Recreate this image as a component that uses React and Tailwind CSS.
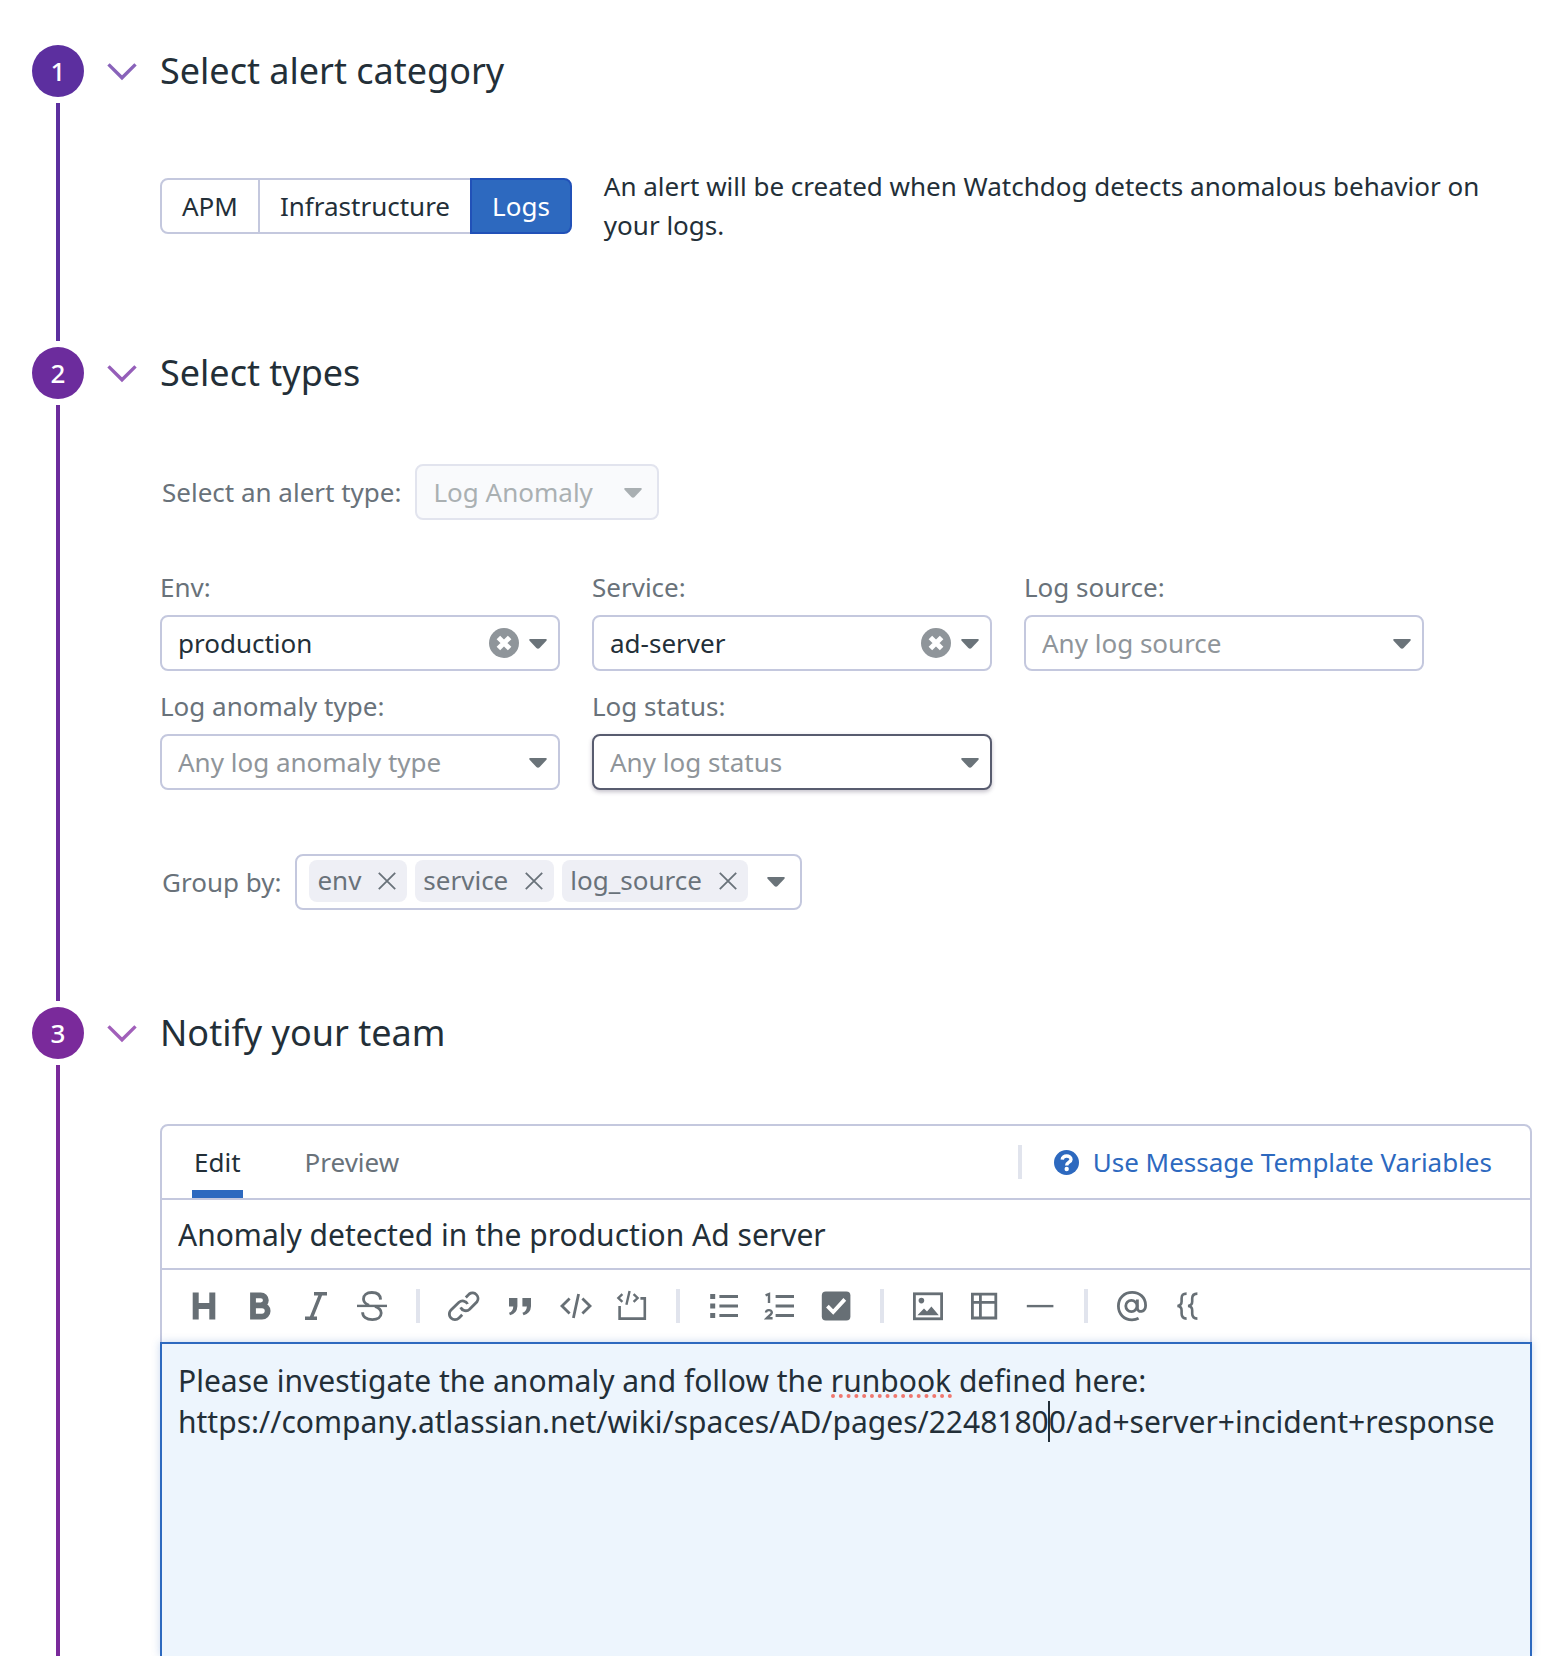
import React from "react";

const FONT = "font-['Noto_Sans','Open_Sans',sans-serif]";

function Step({ number, title, fill, chevron, last, children }) {
  return (
    <section className={"flex gap-6 px-8 " + (last ? "flex-1" : "")}>
      <div className="flex w-[52px] shrink-0 flex-col items-center gap-1.5 pb-1.5">
        <div
          className={
            "flex size-[52px] shrink-0 items-center justify-center rounded-full text-[26px] leading-[39px] font-medium text-white " +
            fill
          }
        >
          {number}
        </div>
        <div className={"w-1 flex-1 " + fill + (last ? " -mb-1.5" : "")} />
      </div>
      <div className="flex min-w-0 flex-1 flex-col">
        <div className="flex h-[52px] shrink-0 items-center gap-6">
          <button type="button" aria-label={"Collapse " + title} className={"w-7 " + chevron}>
            <svg viewBox="0 0 28 18" className="w-7 overflow-visible" fill="none" stroke="currentColor" strokeWidth="3.4">
              <path d="M0.5 2.4 L14 15.8 L27.5 2.4" />
            </svg>
          </button>
          <h2 className="text-[36px] leading-[52px]">{title}</h2>
        </div>
        <div className={"mt-[65px] flex flex-1 flex-col pl-[52px] " + (last ? "" : "pb-[97px]")}>{children}</div>
      </div>
    </section>
  );
}

function Caret({ className = "" }) {
  return (
    <svg viewBox="0 0 18 10" className={"w-[18px] shrink-0 " + className} fill="currentColor" aria-hidden="true">
      <path d="M1.2 0 H16.8 Q18.4 0.3 17.4 1.8 L10.6 9.1 Q9 10.5 7.4 9.1 L0.6 1.8 Q-0.4 0.3 1.2 0Z" />
    </svg>
  );
}

function Field({ id, label, value, placeholder, focused }) {
  return (
    <div className="flex flex-col gap-2">
      <label htmlFor={id} className="leading-[39px] text-[#69727a]">
        {label}
      </label>
      <div className="relative">
        <select
          id={id}
          defaultValue={value || ""}
          className={
            "h-14 w-full appearance-none rounded-lg border-2 bg-white px-4 outline-none " +
            (value ? "text-[#232f38] " : "text-[#8f959a] ") +
            (focused ? "border-[#585c6f] shadow-[0_2px_4px_rgba(60,50,80,0.3)]" : "border-[#c4c8de]")
          }
        >
          <option value="">{placeholder}</option>
          {value && <option value={value}>{value}</option>}
        </select>
        {value && (
          <button type="button" aria-label={"Clear " + label} className="absolute top-[13px] right-[41px]">
            <svg viewBox="0 0 30 30" className="size-[30px]" aria-hidden="true">
              <circle cx="15" cy="15" r="15" fill="#8f959a" />
              <path d="M9.4 9.4 L20.6 20.6 M20.6 9.4 L9.4 20.6" stroke="#fff" strokeWidth="5" />
            </svg>
          </button>
        )}
        <Caret className="pointer-events-none absolute top-6 right-[13px] text-[#6a7379]" />
      </div>
    </div>
  );
}

function Tag({ children }) {
  return (
    <span className="flex h-[42px] items-center gap-[17px] rounded-lg bg-[#eeeff5] pr-[11px] pb-px pl-2 leading-[39px] text-[#69727a]">
      {children}
      <button type="button" aria-label={"Remove " + children}>
        <svg viewBox="0 0 18 18" className="size-[18px]" stroke="currentColor" strokeWidth="1.8" aria-hidden="true">
          <path d="M0.8 0.8 L17.2 17.2 M17.2 0.8 L0.8 17.2" />
        </svg>
      </button>
    </span>
  );
}

function Tool({ label, children }) {
  return (
    <button type="button" aria-label={label} title={label} className="size-8 shrink-0">
      <svg
        viewBox="0 0 32 32"
        className="size-8"
        fill="none"
        stroke="currentColor"
        strokeWidth="2.8"
        aria-hidden="true"
      >
        {children}
      </svg>
    </button>
  );
}

function Divider({ className = "" }) {
  return <span className={"h-[34px] w-1 shrink-0 bg-[#e1e4ed] " + className} />;
}

function Toolbar() {
  return (
    <div
      role="toolbar"
      aria-label="Formatting"
      className="flex h-[72px] shrink-0 items-center gap-6 border-x-2 border-[#c4c8de] pl-[26px] text-[#676f75]"
    >
      <Tool label="Heading">
        <path d="M7.7 2.5 V29.5 M24.3 2.5 V29.5 M7.7 16 H24.3" strokeWidth="6" />
      </Tool>
      <Tool label="Bold">
        <path d="M9 5.3 H16.8 A4.9 4.9 0 0 1 16.8 15.4 H9 Z M9 15.4 H18 A5.5 5.5 0 0 1 18 26.7 H9 Z" strokeWidth="5.8" />
      </Tool>
      <Tool label="Italic">
        <path d="M14 3.8 H27 M5 28.2 H17 M20.8 4 L11.2 28" strokeWidth="3.4" />
      </Tool>
      <Tool label="Strikethrough">
        <path d="M1 15.9 H31" strokeWidth="2.4" />
        <path d="M24.6 9.6 C24.4 5 21 2.5 15.8 2.5 C10.6 2.5 7.5 5 7.5 9 C7.5 12.4 10 14.2 13 15.4 M19 16.4 C22.4 17.6 25.2 19.4 25.2 23 C25.2 27 21.6 29.6 16.4 29.6 C10.4 29.6 6.6 27 6.6 22.2" />
      </Tool>
      <Divider className="mx-1" />
      <Tool label="Link">
        <path d="M17.8 7.4 L21.2 4 A5.6 5.6 0 0 1 29 11.8 L21.6 19.2 A5.6 5.6 0 0 1 12.6 17.4" />
        <path d="M19.6 14 A5.6 5.6 0 0 0 11 12.2 L3 20 A5.6 5.6 0 0 0 11 28 L14.2 24.8" />
      </Tool>
      <Tool label="Quote">
        <path
          d="M5 8 H13.4 V16.2 Q13 23.4 6 25.2 L5 22.8 Q9 21.2 9.3 16.4 H5 Z M18.4 8 H27 V16.2 Q26.6 23.4 19.6 25.2 L18.4 22.8 Q22.6 21.2 22.9 16.4 H18.4 Z"
          fill="currentColor"
          stroke="none"
        />
      </Tool>
      <Tool label="Inline code">
        <path d="M9.6 8.6 L2 16 L9.6 23.4 M22.4 8.6 L30 16 L22.4 23.4 M18.6 4 L13.4 28" />
      </Tool>
      <Tool label="Code block">
        <path d="M3.6 16 V28.6 H28.8 V8.4 H24.4" strokeWidth="2.6" />
        <path d="M6.4 4.2 L2.4 8 L6.4 11.8 M17.6 4.2 L21.6 8 L17.6 11.8 M13.6 1 L10.4 14.8" strokeWidth="2.4" />
      </Tool>
      <Divider className="mx-1" />
      <Tool label="Bulleted list">
        <path d="M2.2 6.4 H7.2 M2.2 16 H7.2 M2.2 25.6 H7.2" strokeWidth="5" />
        <path d="M11.4 6.4 H30 M11.4 16 H30 M11.4 25.6 H30" strokeWidth="3" />
      </Tool>
      <Tool label="Numbered list">
        <path d="M11.6 6.4 H30 M11.6 16 H30 M11.6 25.6 H30" strokeWidth="3" />
        <path d="M1.6 5.4 L5 4 V13" strokeWidth="2.4" />
        <path d="M2 22.6 C2 19.4 7.8 19.2 7.8 22.4 C7.8 24.2 5 25.8 2.6 28.3 H8.6" strokeWidth="2.4" />
      </Tool>
      <Tool label="Checklist">
        <rect x="1.8" y="1.6" width="28.6" height="29" rx="4" fill="currentColor" stroke="none" />
        <path d="M7.4 16.2 L13.2 22 L24.8 9.4" stroke="#fff" strokeWidth="3.8" />
      </Tool>
      <Divider className="mx-1" />
      <Tool label="Image">
        <rect x="2.4" y="3.8" width="27.2" height="25" />
        <circle cx="9.4" cy="10.6" r="2.8" fill="currentColor" stroke="none" />
        <path d="M5.4 25.2 L12 18.4 L15 21.4 L19.4 16.4 L26.8 25.2 Z" fill="currentColor" stroke="none" />
      </Tool>
      <Tool label="Table">
        <path d="M4.4 4.2 H27.8 V28 H4.4 Z M4.4 12.4 H27.8 M12.4 4.2 V28" />
      </Tool>
      <Tool label="Horizontal rule">
        <path d="M2.8 16.1 H29.4" strokeWidth="2.4" />
      </Tool>
      <Divider className="mx-1" />
      <Tool label="Mention">
        <circle cx="15.4" cy="16" r="5.6" />
        <path d="M21.4 9.4 V18 C21.4 23.4 29.6 22.4 29.6 15.4 C29.6 7.4 23.6 2.4 16.2 2.4 C8.2 2.4 2.4 8 2.4 16 C2.4 24 8.2 29.8 16 29.8 C18.6 29.8 20.8 29.2 22.6 28.2" />
      </Tool>
      <Tool label="Template variable">
        <path d="M14.6 3.6 C10.6 3.6 9.6 5.2 9.6 8.4 V11.6 C9.6 14.4 8.4 15.8 5.4 16 C8.4 16.2 9.6 17.6 9.6 20.4 V23.6 C9.6 26.8 10.6 28.6 14.6 28.6 M25.4 3.6 C21.4 3.6 20.2 5.2 20.2 8.4 V11.6 C20.2 14.4 19 15.8 16 16 C19 16.2 20.2 17.6 20.2 20.4 V23.6 C20.2 26.8 21.4 28.6 25.4 28.6" strokeWidth="2.6" />
      </Tool>
    </div>
  );
}

const MESSAGE =
  "Please investigate the anomaly and follow the runbook defined here:\nhttps://company.atlassian.net/wiki/spaces/AD/pages/22481800/ad+server+incident+response";

export default function App() {
  return (
    <main className={"flex min-h-screen flex-col bg-white pt-[45px] text-[26px] text-[#232f38] " + FONT}>
      <Step number={1} title="Select alert category" fill="bg-[#5c2f9f]" chevron="text-[#8963ba]">
        <div className="flex items-center gap-8 py-[5px]">
          <div role="group" aria-label="Alert category" className="flex shrink-0 leading-[39px]">
            <button type="button" aria-pressed="false" className="h-14 rounded-l-lg border-2 border-[#c4c8de] px-5">
              APM
            </button>
            <button type="button" aria-pressed="false" className="h-14 border-y-2 border-[#c4c8de] px-5">
              Infrastructure
            </button>
            <button
              type="button"
              aria-pressed="true"
              className="h-14 rounded-r-lg border-2 border-[#2151b8] bg-[#2d69bf] px-5 text-white"
            >
              Logs
            </button>
          </div>
          <p className="leading-[39px]">
            An alert will be created when Watchdog detects anomalous behavior on your logs.
          </p>
        </div>
      </Step>

      <Step number={2} title="Select types" fill="bg-[#6c2c9d]" chevron="text-[#955eb9]">
        <div className="flex items-center gap-3.5 pl-0.5">
          <label htmlFor="alert-type" className="text-[#69727a]">
            Select an alert type:
          </label>
          <div className="relative">
            <select
              id="alert-type"
              disabled
              defaultValue="Log Anomaly"
              className="h-14 w-[244px] appearance-none rounded-lg border-2 border-[#e2e4ee] bg-[#f9fafc] px-4 text-[#aab0b2] opacity-100"
            >
              <option>Log Anomaly</option>
            </select>
            <Caret className="pointer-events-none absolute top-6 right-[17px] text-[#a9afb2]" />
          </div>
        </div>

        <div className="mt-12 grid grid-cols-[repeat(3,400px)] gap-x-8 gap-y-4">
          <Field id="env" label="Env:" value="production" placeholder="Any env" />
          <Field id="service" label="Service:" value="ad-server" placeholder="Any service" />
          <Field id="log-source" label="Log source:" placeholder="Any log source" />
          <Field id="anomaly-type" label="Log anomaly type:" placeholder="Any log anomaly type" />
          <Field id="log-status" label="Log status:" placeholder="Any log status" focused />
        </div>

        <div className="mt-16 flex items-center gap-3.5 pl-0.5">
          <span id="group-by" className="text-[#69727a]">
            Group by:
          </span>
          <div
            role="group"
            aria-labelledby="group-by"
            className="flex h-14 items-start gap-2 rounded-lg border-2 border-[#c4c8de] pt-1 pr-[15px] pl-3"
          >
            <Tag>env</Tag>
            <Tag>service</Tag>
            <Tag>log_source</Tag>
            <button type="button" aria-label="Add group" className="ml-[11px] self-center pb-1 text-[#6a7379]">
              <Caret />
            </button>
          </div>
        </div>
      </Step>

      <Step number={3} title="Notify your team" fill="bg-[#7a2a9b]" chevron="text-[#a15fba]" last>
        <div className="flex h-[76px] shrink-0 items-stretch rounded-t-lg border-2 border-[#c4c8de] pr-[38px] pl-[30px] leading-[39px]">
          <div role="tablist" aria-label="Message" className="flex gap-[62px]">
            <button
              type="button"
              role="tab"
              aria-selected="true"
              className="border-b-8 border-[#2d69bf] px-0.5 pt-2"
            >
              Edit
            </button>
            <button type="button" role="tab" aria-selected="false" className="text-[#69727a]">
              Preview
            </button>
          </div>
          <div className="ml-auto flex items-center gap-8">
            <Divider />
            <a href="#template-variables" className="flex items-center gap-3.5 text-[#2d69bf]">
              <svg viewBox="0 0 25 25" className="size-[25px]" aria-hidden="true">
                <circle cx="12.5" cy="12.5" r="12.5" fill="currentColor" />
                <path
                  d="M8.2 9.6 C8.4 4.8 17 4.8 17 9.4 C17 12.4 12.7 11.8 12.7 15.4"
                  fill="none"
                  stroke="#fff"
                  strokeWidth="3.4"
                />
                <circle cx="12.7" cy="19" r="2.2" fill="#fff" />
              </svg>
              Use Message Template Variables
            </a>
          </div>
        </div>
        <input
          type="text"
          aria-label="Title"
          defaultValue="Anomaly detected in the production Ad server"
          className="h-[70px] shrink-0 border-x-2 border-b-2 border-[#c4c8de] px-4 text-[30px] outline-none"
        />
        <Toolbar />
        <div className="relative flex flex-1 flex-col">
          <textarea
            aria-label="Message"
            spellCheck="false"
            defaultValue={MESSAGE}
            className="min-h-[314px] flex-1 resize-none border-2 border-b-0 border-[#2d69bf] bg-[#edf5fd] px-4 py-4 text-[30px] leading-[41px] shadow-[0_0_8px_rgba(45,105,191,0.25)] outline-none"
          />
          <span className="pointer-events-none absolute top-[52px] left-[671px] w-[121px] border-b-4 border-dotted border-[#f0776e]" />
          <span className="pointer-events-none absolute top-[59px] left-[888px] h-[41px] w-0.5 bg-[#232f38]" />
        </div>
      </Step>
    </main>
  );
}
